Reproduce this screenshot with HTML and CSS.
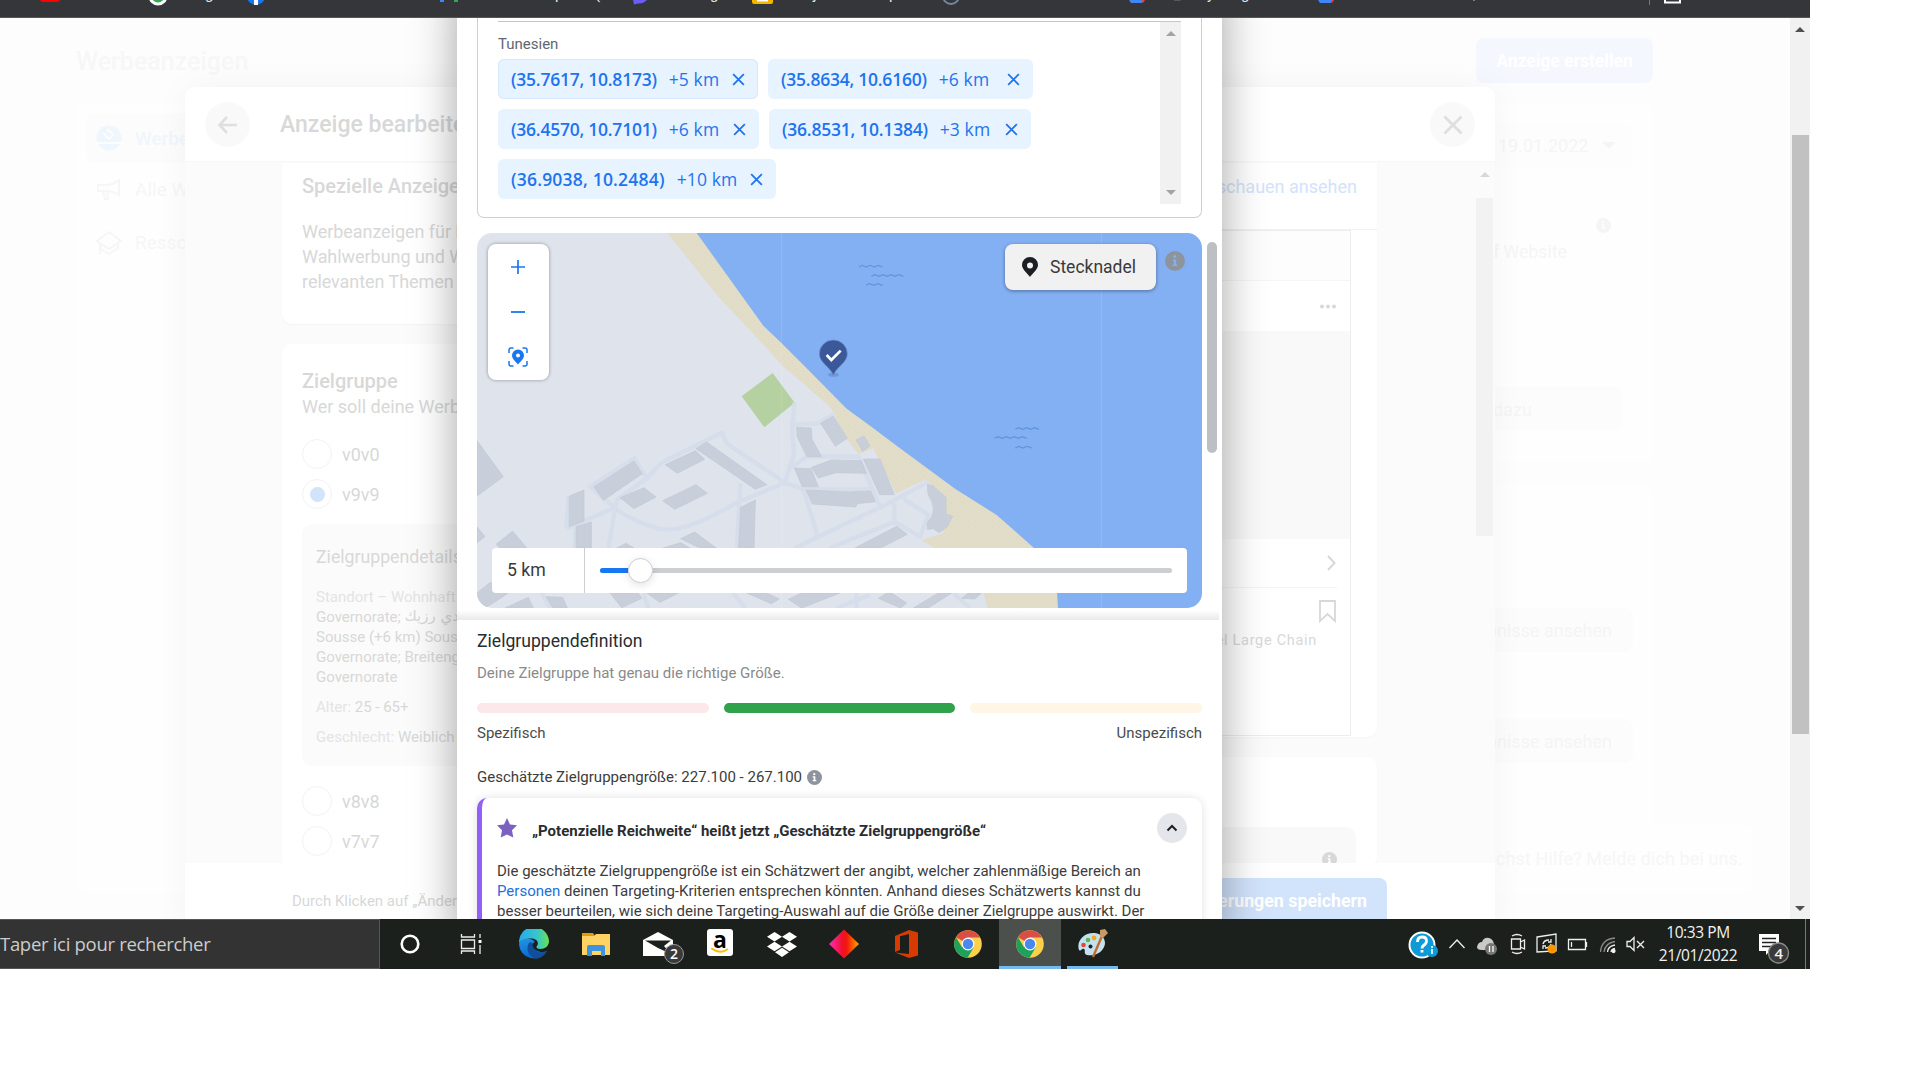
FILE: index.html
```html
<!DOCTYPE html>
<html lang="de">
<head>
<meta charset="utf-8">
<title>Werbeanzeigen</title>
<link rel="stylesheet" href="styles.css">
</head>
<body>
<svg class="defs" width="0" height="0">
  <defs>
    <symbol id="x" viewBox="0 0 16 16"><path d="M2.3 2.3 13.7 13.7M13.7 2.3 2.3 13.7" fill="none" stroke="currentColor" stroke-width="1.9"/></symbol>
    <symbol id="info" viewBox="0 0 20 20"><circle cx="10" cy="10" r="10" fill="currentColor"/><g fill="var(--i, #fff)"><circle cx="9.7" cy="5.6" r="1.5"/><path d="M7.6 8.4h3.5v5h1.3v1.5H7.6v-1.5h1.2v-3.5H7.6z"/></g></symbol>
    <symbol id="chrome" viewBox="0 0 28 28"><circle cx="14" cy="14" r="13.8" fill="#fcd04b"/><path d="M14 14 2 7.2A13.8 13.8 0 0 1 26 7.5H14z" fill="#d94f45"/><path d="M2 7.2A13.8 13.8 0 0 0 13.6 27.8l6-10.4L14 14 8 17.3z" fill="#1fa05b"/><circle cx="14" cy="14" r="6.4" fill="#fff"/><circle cx="14" cy="14" r="5.2" fill="#4a87ee"/></symbol>
    <pattern id="grain" width="18" height="18" patternUnits="userSpaceOnUse"><path d="M2 3h3M11 7h3M5 13h3M14 16h2" stroke="#d7d1b3" stroke-width="1.6"/></pattern>
  </defs>
</svg>
<div class="screen">
  <div class="browser">
    <svg width="1810" height="18" viewBox="0 0 1810 18">
      <rect x="40" y="-8" width="20" height="10" rx="3" fill="#f00"/>
      <circle cx="158" cy="-4" r="9.5" fill="#fff"/><circle cx="158" cy="-4" r="6.5" fill="#34a853"/>
      <circle cx="256" cy="-4" r="9" fill="#1877f2"/><path d="M254 0h4v5h-4z" fill="#fff"/>
      <path d="M440 0h4v2h-4z" fill="#4285f4"/><path d="M454 0h4v2h-4z" fill="#34a853"/>
      <path d="M633 0h14q-4 4-9 3.500l-4 1z" fill="#6a5cf5"/>
      <rect x="752" y="-8" width="21" height="12" rx="2" fill="#f4b400"/><path d="M757 0h11v1.500h-11z" fill="#fff"/>
      <circle cx="951" cy="-4" r="8" fill="none" stroke="#74869c" stroke-width="2"/>
      <path d="M1129 0h15l-2 3h-11z" fill="#4285f4"/><path d="m1142 0 3 0-2 3z" fill="#ea4335"/>
      <path d="M1318 0h15l-2 3h-11z" fill="#4285f4"/><path d="m1331 0 3 0-2 3z" fill="#ea4335"/>
      <path d="M1649.500 0v5" stroke="#777"/><path d="M1665 0v2.500h15V0" fill="none" stroke="#fff" stroke-width="2"/>
      <g class="tabtext"><text x="205" y="-1">g</text><text x="555" y="-1">p</text><text x="595" y="-1">(</text><text x="710" y="-1">g</text><text x="813" y="-1">j</text><text x="889" y="-1">p</text><text x="1174" y="-1">_</text><text x="1207" y="-1">y</text><text x="1241" y="-1">g</text><text x="1473" y="-1">,</text></g>
    </svg>
  </div>

  <div class="viewport">
    <div class="page">
      <aside class="side">
        <h1>Werbeanzeigen</h1>
        <nav>
          <div class="nav on"><svg width="26" height="26" viewBox="0 0 26 26"><circle cx="13" cy="13" r="12.500" fill="currentColor"/><path d="M0 18h26M7 8l6 6M13 14l4-4M11 4l6 5" stroke="#fff" stroke-width="1.500" fill="none"/></svg>Werbe</div>
          <div class="nav"><svg width="26" height="22" viewBox="0 0 26 22" fill="none" stroke="currentColor" stroke-width="2"><path d="M2 6h7q8 0 14-5v15q-6-4-14-4H2zM7 12l2 8h3l-1-8"/></svg>Alle W</div>
          <div class="nav"><svg width="26" height="26" viewBox="0 0 26 26" fill="none" stroke="currentColor" stroke-width="2"><path d="M1 11 13 2l12 9-12 8zM5 14v5l8 5 9-6v-5M4 13v11"/></svg>Resso</div>
        </nav>
      </aside>
      <div class="pright">
        <div class="create">Anzeige erstellen</div>
        <div class="pcard p1">
          <div class="date"><span>19.01.2022</span><i class="tri down"></i></div>
          <div class="pinfo"><svg width="15" height="15"><use href="#info"/></svg></div>
          <div class="website">f Website</div>
          <div class="pbtn dazu">dazu</div>
        </div>
        <div class="pcard p2">
          <div class="pbtn">bnisse ansehen</div>
          <div class="pbtn">bnisse ansehen</div>
        </div>
        <div class="help">uchst Hilfe? Melde dich bei uns.</div>
      </div>
    </div>

    <div class="scroll outer"><i class="tri up"></i><b></b><i class="tri down"></i></div>

    <div class="dialog">
      <header>
        <span class="round"><svg width="22" height="22" viewBox="0 0 22 22" fill="none" stroke="currentColor" stroke-width="2.600"><path d="M20 11H3M10 3 2.500 11l7.500 8"/></svg></span>
        <h2>Anzeige bearbeite</h2>
        <span class="round"><svg width="24" height="24"><use href="#x"/></svg></span>
      </header>
      <div class="dbody">
        <div class="dleft">
          <section class="dcard c1">
            <h3>Spezielle Anzeige</h3>
            <p>Werbeanzeigen für K<br>Wahlwerbung und W<br>relevanten Themen</p>
          </section>
          <section class="dcard c2">
            <h3>Zielgruppe</h3>
            <p>Wer soll deine Werbe</p>
            <div class="radio first"><i></i>v0v0</div>
            <div class="radio sel"><i></i>v9v9</div>
            <div class="details">
              <h4>Zielgruppendetails</h4>
              <p><em>Standort – Wohnhaft</em><br>Governorate; <span class="ar" dir="rtl">هدي رزيك</span><br>Sousse (+6 km) Sous<br>Governorate; Breiteng<br>Governorate</p>
              <p><em>Alter:</em> 25 - 65+</p>
              <p><em>Geschlecht:</em> Weiblich</p>
            </div>
            <div class="radio"><i></i>v8v8</div>
            <div class="radio"><i></i>v7v7</div>
          </section>
        </div>
        <div class="dright">
          <section class="dcard r1">
            <div class="vorschau">schauen ansehen</div>
            <div class="preview">
              <div class="pv1"></div>
              <div class="pv2"><svg width="16" height="5" viewBox="0 0 16 5" fill="currentColor"><circle cx="2" cy="2.500" r="2"/><circle cx="8" cy="2.500" r="2"/><circle cx="14" cy="2.500" r="2"/></svg></div>
              <div class="pv3"></div>
              <div class="pv4"><svg width="9" height="16" viewBox="0 0 9 16" fill="none" stroke="currentColor" stroke-width="2"><path d="m1 1 6.500 7L1 15"/></svg></div>
              <div class="pv5"><svg width="17" height="23" viewBox="0 0 17 23" fill="none" stroke="currentColor" stroke-width="1.800"><path d="M1 1h15v20l-7.500-7L1 21z"/></svg></div>
              <div class="pv6">el Large Chain</div>
            </div>
          </section>
          <section class="dcard r2"><div class="greybox"><svg width="15" height="15"><use href="#info"/></svg></div></section>
        </div>
        <div class="scroll inner"><i class="tri up"></i><b></b></div>
      </div>
      <footer><span>Durch Klicken auf „Änder</span><div class="save">erungen speichern</div></footer>
    </div>

    <div class="modal">
      <div class="locbox">
        <div class="loc">
          <div class="places">
            <div class="country">Tunesien</div>
            <div class="chips">
              <div class="chip focus" style="width:260px"><b>(35.7617, 10.8173)</b><span>+5 km</span><svg><use href="#x"/></svg></div>
              <div class="chip" style="width:265px"><b>(35.8634, 10.6160)</b><span>+6 km</span><svg><use href="#x"/></svg></div>
            </div>
            <div class="chips">
              <div class="chip" style="width:261px"><b>(36.4570, 10.7101)</b><span>+6 km</span><svg><use href="#x"/></svg></div>
              <div class="chip" style="width:262px"><b>(36.8531, 10.1384)</b><span>+3 km</span><svg><use href="#x"/></svg></div>
            </div>
            <div class="chips">
              <div class="chip wide" style="width:278px"><b>(36.9038, 10.2484)</b><span>+10 km</span><svg><use href="#x"/></svg></div>
            </div>
          </div>
          <div class="scroll list"><i class="tri up"></i><i class="tri down"></i></div>
        </div>
      </div>

      <div class="map">
        <svg class="tiles" width="725" height="375" viewBox="21 39 2175 1125">
          <rect x="21" y="39" width="2175" height="1125" fill="#dfe3ec"/>
          <path id="beach" d="M592 39 745 230 900 395 935 435 1080 560 1130 655 1165 702 1210 685 1277 820 1370 778 1425 850 1420 940 1355 960 1480 1040 1540 1119 1553 1164H1800V700L1130 540 900 300 720 39z" fill="#e2ddc8"/>
          <path d="M592 39 745 230 900 395 935 435 1080 560 1130 655 1165 702 1210 685 1277 820 1370 778 1425 850 1420 940 1355 960 1480 1040 1540 1119 1553 1164H1800V700L1130 540 900 300 720 39z" fill="url(#grain)"/>
          <path d="M680 39 880 317 935 370 1010 445 1130 566 1200 617 1290 685 1455 806 1580 885 1692 984 1760 1100 1764 1164H2196V39z" fill="#83b0f3"/>
          <path d="M815 529 908 459 974 548 883 622z" fill="#b5d1a1"/>
          <g fill="none" stroke="#d5deea" stroke-width="13" stroke-linejoin="round">
            <path d="M974 548 966 620 972 700 945 788 800 848Q700 905 650 918 590 938 545 920 470 895 430 860L360 800 493 715 530 775 575 728 755 638 772 672 945 788 1000 808H1210"/>
            <path d="M966 614 1045 610 1095 580M960 745 1010 710H1165L1230 860M1000 808 1045 955M812 790 800 984M415 984 440 840 530 775M290 925 430 865M296 828 290 925M975 984 1255 850 1375 785M1273 850V905L1350 950 1375 885 1300 835M1080 984 1273 905"/>
            <path d="M520 1119 535 1164M790 1119 825 1164M1160 1119V1164M1100 1164 1200 1125M215 1119 240 1164M1450 1119 1500 1164M315 925V984"/>
          </g>
          <g fill="#c8cfda" stroke="#c0c8d4" stroke-width="2">
            <path d="M21 662 100 770 21 828z"/><path d="m372 800 120-77 25 38-117 80z"/><path d="m298 828 44-18v93l-44 17z"/><path d="m318 920 46-14v78h-46z"/>
            <path d="m586 734 90-42 28 26-82 42z"/><path d="m678 686 32-20 180 128-34 14z"/><path d="m450 833 72-30 36 28-66 35z"/><path d="m578 842 100-48 34 26-98 48z"/>
            <path d="m812 862 44-22-4 144h-46z"/><path d="m980 622 44 2 2 34 29 52h-44l-30-60z"/><path d="m1052 610 38-22 42 67-36 24z"/><path d="m973 744 50 2 22 54h-48z"/><path d="m1024 742 60-22 90 2 15 38-90-2-54 16z"/><path d="m1008 810 130 6 64-3 14 32-54 6-5 10-130-9z"/>
            <path d="m1158 660 24-12 18 30-22 16z"/><path d="M1180 717h50l43 107h-44z"/><path d="m1372 793 16 4 40 35v50l20 6-16 32-24 18-18-12-18 2v-20q35-35 2-85z"/><path d="m1155 984 125-65 32 24-80 41z"/>
            <path d="m78 973 50-40 42 51H90z"/><path d="m21 920 24 30-24 18z"/><path d="m632 956 42-20 65 48h-50z"/><path d="m440 984 28-14 24 14zM580 984l52-16 28 16z"/>
            <path d="m21 1119 40-32 54 32-65 43-29-10zM105 1164l70-32 15 32zM228 1130l50 2 14 32h-44z"/><path d="M420 1119h85l10 16-60 28zM530 1119h96l-56 28zM830 1119h60l38 18-24 14zM955 1138l40-19h115l-115 45z"/>
            <path d="m1225 1135 25-16h15l45 30-18 15zM1330 1164l75-45h40l-70 45zM1475 1135l20-16h40l-20 18z"/>
          </g>
          <g fill="none" stroke="#5f93e0" stroke-width="3.500">
            <path d="m1167 141 10-5 12 5 12-5 12 5 12-5 13 5"/><path d="m1204 169 10-5 13 5 12-5 12 5 12-5 12 5 12-5 13 5M1188 196l10-5 13 5 12-5 15 5"/>
            <path d="m1636 628 10-5 12 5 12-5 12 5 12-5 13 5M1574 655l10-5 13 5 12-5 12 5 12-5 12 5 12-5 13 5M1636 684l10-5 13 5 12-5 15 5"/>
          </g>
          <path d="M935 39V1164M1894 39V1164" stroke="#fff" stroke-opacity=".13" stroke-width="3"/>
          <ellipse cx="1090" cy="464" rx="16" ry="6" fill="#456ca8" opacity=".35"/>
          <path d="M1090 466C1080 440 1048 428 1048 402a42 42 0 0 1 84 0C1132 428 1100 440 1090 466z" fill="#3b5998" stroke="#6f8fce" stroke-width="2"/>
          <path d="m1070 405 14 15 28-28" fill="none" stroke="#fff" stroke-width="8"/>
        </svg>
        <div class="zoomctl">
          <svg width="14" height="14" viewBox="0 0 14 14" fill="none" stroke="#1877f2" stroke-width="1.700"><path d="M0 7h14M7 0v14"/></svg>
          <svg width="14" height="14" viewBox="0 0 14 14" fill="none" stroke="#1877f2" stroke-width="1.800"><path d="M0 8h14"/></svg>
          <svg width="20" height="20" viewBox="0 0 20 20" fill="none" stroke="#1877f2" stroke-width="1.500"><path d="M1 6V3a2 2 0 0 1 2-2h2.500M14.500 1H17a2 2 0 0 1 2 2v3M19 14v3a2 2 0 0 1-2 2h-2.500M5.500 19H3a2 2 0 0 1-2-2v-3"/><path fill="#1877f2" stroke="none" fill-rule="evenodd" d="M10 17.500C8 15 4 12 4 8.600a6 6 0 0 1 12 0C16 12 12 15 10 17.500zM10 6.400a2 2 0 1 0 0 4 2 2 0 0 0 0-4z"/></svg>
        </div>
        <div class="pinbtn"><svg width="16" height="20" viewBox="0 0 16 20"><path fill="#1c1e21" fill-rule="evenodd" d="M8 20C6 17 0 12.500 0 8a8 8 0 0 1 16 0c0 4.500-6 9-8 12zM8 5.400a3 3 0 1 0 0 6 3 3 0 0 0 0-6z"/></svg>Stecknadel</div>
        <svg class="mapinfo" width="20" height="20"><use href="#info"/></svg>
        <div class="radius"><span>5 km</span><div class="track"><b></b><i></i></div></div>
      </div>
      <i class="mscroll"></i>
      <div class="strip"></div>

      <div class="definition">
        <h3>Zielgruppendefinition</h3>
        <p>Deine Zielgruppe hat genau die richtige Größe.</p>
        <div class="bars"><i class="red"></i><i class="green"></i><i class="yellow"></i></div>
        <div class="labels"><span>Spezifisch</span><span>Unspezifisch</span></div>
        <div class="estimate">Geschätzte Zielgruppengröße: 227.100 - 267.100 <svg width="15" height="15"><use href="#info"/></svg></div>
        <div class="notice">
          <div class="nhead"><svg width="20" height="20" viewBox="0 0 20 20"><path d="m10 0 3 6.500 7 .8-5 5 1.300 7.200L10 16.500l-6.300 3L5 12.300l-5-5 7-.8z" fill="#7b62c0"/></svg><b>„Potenzielle Reichweite“ heißt jetzt „Geschätzte Zielgruppengröße“</b><span><svg width="12" height="8" viewBox="0 0 12 8"><path d="m1.500 6.500 4.500-4.500 4.500 4.500" fill="none" stroke="#1c1e21" stroke-width="2"/></svg></span></div>
          <div class="ntext">Die geschätzte Zielgruppengröße ist ein Schätzwert der angibt, welcher zahlenmäßige Bereich an<br><a>Personen</a> deinen Targeting-Kriterien entsprechen könnten. Anhand dieses Schätzwerts kannst du<br>besser beurteilen, wie sich deine Targeting-Auswahl auf die Größe deiner Zielgruppe auswirkt. Der</div>
        </div>
      </div>
    </div>
  </div>

  <div class="taskbar">
    <div class="search">Taper ici pour rechercher</div>
    <div class="apps">
      <div><svg width="20" height="20"><circle cx="10" cy="10" r="8.300" fill="none" stroke="#fff" stroke-width="2.600"/></svg></div>
      <div><svg width="24" height="20" viewBox="0 0 24 20" fill="none" stroke="#eee" stroke-width="1.300"><path d="M1.500 0v3h13V0M1.500 6h13v8.500h-13zM1.500 20v-3h13v3M20 0v4M20 11v9"/><path d="M18.500 6h3v3h-3z" fill="#fff" stroke="none"/></svg></div>
      <div><svg width="30" height="30" viewBox="0 0 30 30"><defs><linearGradient id="eg" x1="0" x2="1"><stop offset="0" stop-color="#2aa9ec"/><stop offset=".6" stop-color="#35c5cf"/><stop offset="1" stop-color="#6be24c"/></linearGradient><linearGradient id="eb" y2="1" x2=".4"><stop offset="0" stop-color="#2296e6"/><stop offset="1" stop-color="#0866c8"/></linearGradient></defs><path d="M0 14A15 15 0 0 1 30 12c0 5-4 8-8.500 8-3 0-4.500-1-4-2.500 3-3 1-8-5-8C7 9.500 2 11 0 14z" fill="url(#eg)"/><path d="M0 15C1 10 7 9 11 10c5 1 6.500 5 4.500 8 0 3 6 7 12.500 4A15 15 0 0 1 0 15z" fill="url(#eb)"/><path d="M11 13c-5 5-2 16 7 16.500 4-.5 8-3.500 10-7.500-6 3-14 1-13-7z" fill="#114f9e"/><path d="M15.500 13c-4 2-2 9 7 9l5-1c-6 1-11-.5-11-3 2-1.500 1-4-1-5z" fill="#1b211c"/></svg></div>
      <div><svg width="28" height="24" viewBox="0 0 28 24"><path d="M0 1h11l2 3H0z" fill="#e29c08"/><path d="M0 4h12l2-2h14v21H0z" fill="#ffd363"/><path d="M5 24V15q0-2 2-2h14q2 0 2 2v9h-4v-5h-9v5z" fill="#3d93dc"/></svg></div>
      <div class="mail"><svg width="30" height="24" viewBox="0 0 30 24"><path d="M0 8 15 0l15 8v16H0z" fill="#fff"/><path d="M2 8.500h26L21 14l7 8-13-6z" fill="#1b211c"/></svg><span class="badge">2</span></div>
      <div class="up"><span class="amazon">a<svg width="18" height="5" viewBox="0 0 18 5"><path d="M0 0q9 7 17 1" fill="none" stroke="#fb0" stroke-width="2"/></svg></span></div>
      <div><svg width="30" height="25" viewBox="0 0 30 25" fill="#fff"><path d="m7.500 0 7.500 4.800-7.500 4.800L0 4.800zM22.500 0 30 4.800l-7.500 4.800L15 4.800zM7.500 9.700l7.500 4.800-7.500 4.800L0 14.500zM22.500 9.700l7.500 4.800-7.500 4.800-7.500-4.800zM15 15.700l7 4.500-7 4.800-7-4.800z"/></svg></div>
      <div><svg width="30" height="30" viewBox="0 0 30 30"><defs><linearGradient id="dg"><stop offset="0" stop-color="#ff2ebd"/><stop offset=".45" stop-color="#f01028"/><stop offset=".6" stop-color="#f21a0a"/><stop offset="1" stop-color="#ffa600"/></linearGradient></defs><path d="m15 .5 15 14.500-15 14.500L0 15z" fill="url(#dg)"/></svg></div>
      <div><svg width="23" height="28" viewBox="0 0 23 28"><path fill="#d83b01" fill-rule="evenodd" d="M0 6 14 0l9 2.500v23L14 28 0 22.500 14 24V4L5 6.300V20L0 22z"/></svg></div>
      <div><svg width="28" height="28"><use href="#chrome"/></svg></div>
      <div class="open active"><svg width="28" height="28"><use href="#chrome"/></svg></div>
      <div class="open paint"><svg width="30" height="30" viewBox="0 0 30 30"><path d="M1 21C-2 12 6 3 17 4c8 1 12 8 9 14-3 7-11 9-17 8-4-1-1-5-3-6s-3 3-5 1z" fill="#c3e2f1"/><circle cx="5.500" cy="16" r="2.300" fill="#e04a3a"/><circle cx="10" cy="11" r="2.300" fill="#5cb947"/><circle cx="16" cy="9" r="2.400" fill="#f7a81b"/><circle cx="12.500" cy="17.500" r="2" fill="#1b211c"/><path d="M24 7 15 28" stroke="#c56b28" stroke-width="2.400"/><path d="m22 1 5-1 3 4-5 5-3-1z" fill="#c99a63"/></svg></div>
    </div>
    <div class="tray">
      <svg width="411" height="50" viewBox="1399 919 411 50" fill="none" stroke="#eee" stroke-width="1.300">
        <circle cx="1422" cy="945" r="12.500" fill="#0e9ad7" stroke="#fff" stroke-width="2"/><path d="M1417.500 942q0-5 4.500-5t4.500 4q0 2.500-3 4.500-1.500 1-1.500 3M1422 950v2.500" stroke="#fff" stroke-width="2.800"/>
        <circle cx="1432" cy="951" r="6" fill="#0e9ad7" stroke="none"/><path d="M1432 949v5M1432 946v2" stroke="#fff" stroke-width="1.600"/>
        <path d="m1449.500 948 7.500-8 7.500 8"/>
        <path d="M1477 947q1-5 5-5 2-5 7-4 4 1 5 6v6h-12q-5 0-5-3z" fill="#c9c9c9" stroke="none"/><circle cx="1491" cy="949" r="6" fill="#777" stroke="none"/><path d="M1489.500 946v6M1493 946v6" stroke="#fff"/>
        <path d="M1511.500 939h9v10h-9zM1520.500 942l4-2v9l-4-2M1512 936q5-3 10 0M1512 952q5 3 10 0"/>
        <path d="m1537 937 19-3v17l-19 1zM1543 944q1-4 6-4M1551 939v3h-3M1551 944q-1 4-6 4M1543 949v-3h3"/><circle cx="1552" cy="949" r="4.500" fill="#ff9800" stroke="none"/>
        <path d="M1568.500 939.500h17v10h-17zM1586.500 942v5M1571.500 942v5"/>
        <g stroke="#888"><path d="M1600.500 952q1-13 14.500-14M1604 952q1-9 11-10.500"/></g><path d="M1607.500 952q.5-6 7.500-7M1611 952q.5-3 4-3.500"/><circle cx="1613.500" cy="951" r="1.500" fill="#fff"/>
        <path d="M1627 941.500h3l4-4v13l-4-4h-3zM1637 941l7 7M1644 941l-7 7"/>
        <path d="M1759 934h20v17h-9l-4 4v-4h-7z" fill="#fff" stroke="none"/><path d="M1762 938.500h14M1762 942.500h14M1762 946.500h10" stroke="#222" stroke-width="1.500"/>
        <circle cx="1778.500" cy="953" r="10" fill="#3a3a3a" stroke="#888"/>
        <path d="M1805.500 919v50" stroke="#777" stroke-width="1"/>
        <g class="traytext"><text x="1698" y="938">10:33 PM</text><text x="1698" y="961">21/01/2022</text><text class="n" x="1778.500" y="959">4</text></g>
      </svg>
    </div>
  </div>
</div>
</body>
</html>
```
FILE: styles.css
```css
* { box-sizing: border-box; }
body { margin: 0; background: #fff; font-family: Roboto, "Liberation Sans", sans-serif; color: #1c1e21; overflow: hidden; }
h1, h2, h3, h4, p { margin: 0; font-weight: 400; }
svg { display: block; flex: none; }
.defs { position: absolute; }
.screen { width: 1810px; height: 969px; overflow: hidden; display: flex; flex-direction: column; }
.browser { height: 18px; background: #35363a; border-bottom: 1px solid #55565a; flex: none; }
.tabtext { fill: #e8eaed; font-size: 15px; }
.viewport { height: 901px; position: relative; overflow: hidden; background: #fdfdfd; flex: none; white-space: nowrap; }

.tri { width: 0; height: 0; border: 5px solid transparent; flex: none; }
.tri.up { border-top: 0; border-bottom-color: currentColor; }
.tri.down { border-bottom: 0; border-top-color: currentColor; }
.scroll { display: flex; flex-direction: column; align-items: center; }

.page { display: flex; justify-content: space-between; padding-left: 76px; }
.side h1 { height: 85px; padding-top: 1px; font-size: 25px; font-weight: 500; line-height: 86px; color: #f7f7f7; }
.side nav { width: 300px; height: 790px; padding: 10px; background: #fefefe; border-radius: 10px; }
.nav { display: flex; align-items: center; gap: 13px; height: 53px; padding-left: 10px; font-size: 19px; color: #f6f6f6; }
.nav.on { height: 50px; background: #fcfcfc; border-radius: 8px; color: #f0f6fd; font-weight: 500; }
.pright { width: 334px; padding-top: 20px; }
.create { width: 177px; height: 45px; border-radius: 8px; background: #f4f8fe; color: #fff; font-size: 17.500px; font-weight: 700; line-height: 46px; text-align: center; }
.pcard { width: 177px; background: #fefefe; border-radius: 0 10px 10px 0; }
.p1 { height: 359px; margin-top: 20px; padding-top: 20px; color: #f5f5f5; font-size: 18px; }
.date { display: flex; align-items: center; gap: 14px; height: 45px; width: 156px; padding-left: 22px; background: #fdfdfd; border-radius: 8px; }
.date .tri { border-width: 7px 7px 0; }
.pinfo { padding: 50px 0 0 120px; }
.website { line-height: 38px; padding-left: 17px; font-size: 17.700px; }
.dazu { margin-top: 116px; }
.pbtn { width: 146px; height: 44px; padding-right: 90px; line-height: 45px; text-align: right; background: #fcfcfc; border-radius: 8px; color: #f5f5f5; }
.p2 { height: 350px; margin-top: 22px; padding-top: 124px; font-size: 18px; }
.p2 .pbtn { width: 157px; padding-right: 21px; margin-bottom: 67px; display: flex; justify-content: flex-end; }
.help { width: 276px; height: 70px; margin-top: -10px; line-height: 70px; padding-left: 10px; background: #fefefe; border-radius: 10px; color: #f6f6f6; font-size: 18px; letter-spacing: .1px; }

.outer { position: absolute; right: 0; top: 0; width: 20px; height: 901px; background: #f1f1f1; color: #505050; justify-content: space-between; padding: 9px 0 8px; }
.outer b { width: 17px; height: 599px; background: #c1c1c1; margin-bottom: 69px; }

.dialog { position: absolute; left: 185px; top: 69px; width: 1310px; height: 840px; background: #fff; border-radius: 10px 10px 0 0; box-shadow: 0 0 35px rgba(0,0,0,.045); color: #d8d8d8; overflow: visible; }
.dialog header { height: 75px; display: flex; align-items: center; padding: 1px 20px 0; border-bottom: 1px solid #f7f7f7; }
.round { width: 45px; height: 45px; border-radius: 50%; background: #f9f9f9; display: flex; align-items: center; justify-content: center; color: #dedfe1; }
.dialog h2 { flex: 1; padding-left: 30px; font-size: 23px; font-weight: 500; }
.dbody { height: 701px; background: #fbfbfb; display: flex; padding-left: 97px; overflow: hidden; }
.dleft { width: 760px; padding-top: 1px; flex: none; }
.dcard { background: #fff; border-radius: 10px; box-shadow: 0 1px 2px #f4f4f4; }
.c1 { height: 161px; padding: 10px 20px; border-radius: 0 0 10px 10px; }
.dcard h3 { font-size: 20px; font-weight: 500; line-height: 26px; }
.dcard p { font-size: 18px; line-height: 25px; }
.c1 p { padding-top: 20px; letter-spacing: -.05px; }
.c2 { height: 540px; margin-top: 20px; padding: 24px 20px; }
.radio { display: flex; align-items: center; gap: 10px; height: 40px; font-size: 18px; }
.radio.first { margin-top: 15px; }
.radio i { width: 30px; height: 30px; border: 1px solid #f3f3f3; border-radius: 50%; display: grid; place-items: center; }
.radio.sel i::before { content: ""; width: 15px; height: 15px; border-radius: 50%; background: #d2e3fc; }
.details { height: 242px; margin: 10px 0 15px; padding: 21px 14px; background: #fbfbfb; border-radius: 10px; }
.details h4 { font-size: 17.700px; line-height: 24px; padding-bottom: 18px; }
.dcard .details p { font-size: 15px; line-height: 20px; padding-bottom: 10px; }
.details em { font-style: normal; color: #e4e4e4; }
.details .ar { display: inline-block; height: 20px; line-height: 18px; vertical-align: top; font-family: "DejaVu Sans", sans-serif; font-size: 15px; }
.dright { width: 335px; padding-top: 1px; flex: none; }
.r1 { height: 574px; border-radius: 0 0 10px 0; padding-right: 26px; }
.vorschau { height: 67px; line-height: 48px; text-align: right; color: #d2e3fc; font-size: 18px; border-bottom: 1px solid #f2f2f2; margin-right: -26px; padding-right: 20px; }
.preview { height: 506px; border: 1px solid #ededed; border-left: 0; }
.pv1 { height: 50px; background: #fdfdfd; border-bottom: 1px solid #f5f5f5; }
.pv2 { height: 50px; display: flex; align-items: center; justify-content: flex-end; padding-right: 14px; }
.pv3 { height: 208px; background: #f9f9f9; }
.pv4 { height: 49px; margin-right: 13px; padding-right: 1px; display: flex; align-items: center; justify-content: flex-end; border-bottom: 1px solid #f5f5f5; }
.pv5 { height: 46px; padding-right: 14px; display: flex; align-items: center; justify-content: flex-end; }
.pv6 { height: 14px; line-height: 14px; text-align: right; padding-right: 33px; font-size: 14.500px; letter-spacing: .7px; }
.r2 { height: 110px; margin-top: 20px; padding: 70px 21px 0 0; }
.greybox { height: 60px; background: #f9f9f9; border-radius: 0 10px 0 0; display: flex; justify-content: flex-end; padding: 25px 19px 0 0; }
.inner { width: 17px; margin-left: 99px; padding-top: 10px; flex: none; }
.inner b { width: 17px; height: 338px; margin-top: 21px; background: #f2f2f2; }
.dialog footer { display: flex; justify-content: space-between; padding: 15px 108px 0 107px; }
.dialog footer span { font-size: 15px; line-height: 46px; }
.save { width: 300px; height: 60px; padding-right: 20px; background: #d2e3fc; color: #fff; border-radius: 8px; font-size: 17.800px; font-weight: 700; line-height: 46px; text-align: right; }

.modal { position: absolute; left: 457px; top: -30px; width: 765px; height: 960px; padding: 30px 20px 0; background: #fff; box-shadow: 0 0 42px rgba(0,0,0,.36); }
.locbox { height: 200px; padding: 3px 20px 0; border: 1px solid #ccd0d5; border-top: 0; border-radius: 0 0 7px 7px; }
.loc { height: 183px; display: flex; justify-content: space-between; border-top: 1px solid #c4c6c9; }
.country { height: 37px; padding-top: 4px; line-height: 36px; font-size: 15px; color: #606770; }
.chips { display: flex; gap: 10px; margin-bottom: 10px; }
.chip { height: 40px; display: flex; align-items: center; padding: 0 12px 0 13px; border-radius: 6px; background: #e7f3ff; color: #1f74ee; font-family: "Open Sans", "Noto Sans", sans-serif; font-size: 17.500px; letter-spacing: -.24px; }
.chip.wide { letter-spacing: 0; }
.chip.wide b { letter-spacing: .2px; }
.chip.focus { box-shadow: inset 0 0 0 1px #d6e8fc; }
.chip b { font-weight: 600; }
.chip span { margin-left: 12px; flex: 1; letter-spacing: .1px; }
.chip svg { width: 15px; height: 15px; }
.list { width: 21px; height: 182px; background: #f1f1f1; color: #a3a3a3; justify-content: space-between; padding: 9px 0; }

.map { position: relative; height: 375px; margin-top: 15px; border-radius: 15px; overflow: hidden; }
.zoomctl { position: absolute; left: 11px; top: 11px; width: 61px; height: 136px; background: #fff; border-radius: 8px; box-shadow: 0 0 3px 1px rgba(0,0,0,.22); display: flex; flex-direction: column; align-items: center; justify-content: space-between; padding: 16px 1px 13px 0; }
.pinbtn { position: absolute; left: 528px; top: 11px; width: 151px; height: 46px; display: flex; align-items: center; gap: 12px; padding-left: 17px; background: #f1f1f1; border-radius: 8px; box-shadow: 0 1px 3px 1px rgba(0,0,0,.25); font-size: 17.500px; color: #3a3a3a; }
.mapinfo { position: absolute; left: 688px; top: 18px; color: #8d949e; --i: #83b0f3; }
.radius { position: absolute; left: 15px; top: 315px; width: 695px; height: 45px; display: flex; align-items: center; background: #fff; border-radius: 4px; font-size: 17.700px; }
.radius span { width: 93px; line-height: 45px; padding-left: 15px; border-right: 1px solid #ccd0d5; color: #3a3a3a; }
.track { flex: 1; margin: 0 15px; height: 5px; border-radius: 3px; background: #ccced2; display: flex; align-items: center; }
.track b { width: 28px; height: 5px; border-radius: 3px 0 0 3px; background: #1877f2; }
.track i { width: 25px; height: 25px; border-radius: 50%; background: #fff; border: 1px solid #ccd0d5; box-shadow: 0 2px 8px rgba(0,0,0,.12); }
.mscroll { position: absolute; left: 750px; top: 254px; width: 10px; height: 211px; border-radius: 5px; background: #bcc0c4; }
.strip { height: 12px; margin: 0 -17px 0 -20px; background: linear-gradient(#fff 20%, #ebebeb 90%); }
.definition h3 { font-size: 17.600px; line-height: 42px; color: #2a2c2f; }
.definition p { font-size: 15px; line-height: 22px; color: #8a8a8a; }
.bars { display: flex; gap: 15px; margin-top: 19px; }
.bars i { flex: 1; height: 10px; border-radius: 5px; }
.red { background: #fce8ea; }
.green { background: #31a24c; }
.yellow { background: #fff6e5; }
.labels { display: flex; justify-content: space-between; font-size: 15px; line-height: 40px; color: #4a4a4a; }
.estimate { height: 45px; padding-top: 3px; display: flex; align-items: center; gap: 5px; font-size: 15px; color: #3c3c3c; }
.estimate svg { color: #8d949e; }
.notice { height: 200px; border-left: 5px solid #9360f7; border-radius: 10px; box-shadow: 0 0 10px rgba(0,0,0,.12); padding: 0 15px; }
.nhead { height: 63px; display: flex; align-items: center; padding-bottom: 3px; font-size: 15px; }
.nhead b { flex: 1; padding: 5px 0 0 15px; font-weight: 700; color: #2a2c2f; }
.nhead > span { width: 30px; height: 30px; border-radius: 50%; background: #e4e6eb; display: grid; place-items: center; }
.ntext { font-size: 15px; line-height: 20px; color: #3c3c3c; }
.ntext a { color: #216fdb; }

.taskbar { height: 50px; display: flex; background: #1b201c; flex: none; }
.search { width: 380px; border: 1px solid #555; border-left: 0; background: #333; color: #ccc; font: 18.500px/48px "Open Sans", "Noto Sans", sans-serif; letter-spacing: -.3px; }
.apps { display: flex; flex: none; margin-left: -1px; }
.apps > div { width: 62px; height: 50px; display: flex; align-items: center; justify-content: center; position: relative; }
.apps .up { padding-bottom: 3px; }
.apps .open { border-bottom: 3px solid #76b9ed; padding-top: 3px; }
.apps .active { background: #4b504c; }
.apps .paint { width: 51px; margin-left: 6px; }
.badge { position: absolute; right: 5px; bottom: 5px; width: 20px; height: 20px; border: 1px solid #999; border-radius: 50%; background: #3a3a3a; color: #fff; font: 600 14px/18px "Open Sans", sans-serif; text-align: center; }
.amazon { width: 26px; height: 27px; border-radius: 3px; background: #fff; color: #000; font: 700 23px/18px "Open Sans", sans-serif; display: flex; flex-direction: column; align-items: center; padding-top: 1px; }
.tray { margin-left: auto; }
.traytext { fill: #f2f2f2; stroke: none; font: 15.500px "Open Sans", "Noto Sans", sans-serif; text-anchor: middle; letter-spacing: -.4px; }
.traytext .n { font-weight: 600; font-size: 15px; }
```
